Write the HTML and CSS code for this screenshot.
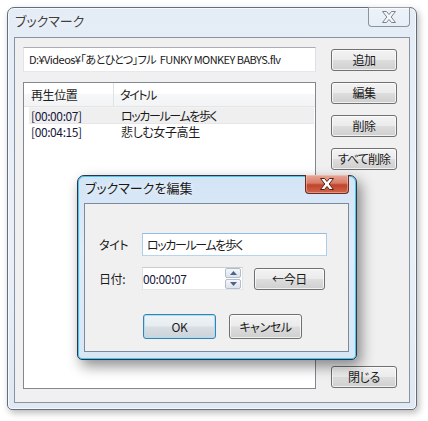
FILE: index.html
```html
<!DOCTYPE html>
<html lang="ja">
<head>
  <meta charset="UTF-8" />
  <meta name="viewport" content="width=device-width, initial-scale=1.0"/>
  <title>ブックマーク</title>
  <link rel="stylesheet" href="styles.css">
</head>
<body>
  <!-- Bookmark window (inactive) -->
  <div class="window main-window">
    <div class="titlebar">
      <span class="title">ブックマーク</span>
      <div class="close-btn inactive">
        <svg width="14" height="12" viewBox="0 0 14 12"><polygon points="0.5,0.5 4.5,0.5 7,3.5 9.5,0.5 13.5,0.5 9.2,6 13.5,11.5 9.5,11.5 7,8.5 4.5,11.5 0.5,11.5 4.8,6"/></svg>
      </div>
    </div>
    <div class="client main-client">
      <div class="left-col">
        <div class="textbox path-box">D:¥Videos¥「あとひとつ」フル&nbsp; FUNKY MONKEY BABYS.flv</div>
        <div class="listview">
          <div class="lv-header">
            <div class="lv-head col-time">再生位置</div>
            <div class="lv-head col-title kana">タイトル</div>
          </div>
          <div class="lv-row selected">
            <span class="cell-time">[00:00:07]</span>
            <span class="cell-title kana">ロッカールームを歩く</span>
          </div>
          <div class="lv-row">
            <span class="cell-time">[00:04:15]</span>
            <span class="cell-title">悲しむ女子高生</span>
          </div>
        </div>
      </div>
      <div class="right-col">
        <button class="btn side-btn">追加</button>
        <button class="btn side-btn">編集</button>
        <button class="btn side-btn">削除</button>
        <button class="btn side-btn tight">すべて削除</button>
        <button class="btn side-btn close-main">閉じる</button>
      </div>
    </div>
  </div>

  <!-- Edit dialog (active, over the main window) -->
  <div class="window dialog">
    <div class="titlebar dialog-bar">
      <span class="title">ブックマークを編集</span>
      <div class="close-btn active">
        <svg width="14" height="12" viewBox="0 0 14 12"><polygon points="0.5,0.5 4.5,0.5 7,3.5 9.5,0.5 13.5,0.5 9.2,6 13.5,11.5 9.5,11.5 7,8.5 4.5,11.5 0.5,11.5 4.8,6"/></svg>
      </div>
    </div>
    <div class="client dialog-client">
      <div class="form-row">
        <span class="label">タイト</span>
        <div class="textbox title-box focused kana">ロッカールームを歩く</div>
      </div>
      <div class="form-row">
        <span class="label">日付:</span>
        <div class="textbox time-box">
          <span class="time-text">00:00:07</span>
          <div class="spinner">
            <div class="spin up"><svg width="7" height="4" viewBox="0 0 7 4"><polygon points="0,4 3.5,0 7,4"/></svg></div>
            <div class="spin down"><svg width="7" height="4" viewBox="0 0 7 4"><polygon points="0,0 7,0 3.5,4"/></svg></div>
          </div>
        </div>
        <button class="btn today-btn">←今日</button>
      </div>
      <div class="button-row">
        <button class="btn dlg-btn default">OK</button>
        <button class="btn dlg-btn">キャンセル</button>
      </div>
    </div>
  </div>
</body>
</html>
```

FILE: styles.css
```css
/* RESET */
* { box-sizing: border-box; margin: 0; padding: 0; }
body {
  background: #fff;
  font-family: "Noto Sans CJK JP", "Noto Sans", sans-serif;
  font-feature-settings: "palt";
  font-size: 12px;
  letter-spacing: -0.4px;
  color: #1a1a1a;
  width: 428px;
  height: 421px;
  overflow: hidden;
  position: relative;
}
.kana { letter-spacing: -1.4px; }

/* WINDOW FRAMES */
.window {
  display: flex;
  flex-direction: column;
  border: 1px solid #626e7c;
  border-radius: 7px 7px 5px 5px;
}
.main-window {
  margin: 7px 0 0 7px;
  width: 410px;
  height: 403px;
  padding: 0 6px 6px 6px;
  background: linear-gradient(#e4ecf6, #e9f0f8 60%, #dfe8f3);
  box-shadow: inset 0 0 0 1px #f7fafd, 2px 3px 7px rgba(0,0,0,0.28);
}
.titlebar {
  display: flex;
  justify-content: space-between;
  align-items: flex-start;
  height: 29px;
}
.title {
  font-size: 13px;
  letter-spacing: 0;
  color: #404040;
  padding: 4px 0 0 1px;
  line-height: 18px;
  text-shadow: 0 0 6px #fff;
}

/* CAPTION CLOSE BUTTONS */
.close-btn {
  display: flex;
  align-items: center;
  justify-content: center;
  margin-top: -1px;
  border-radius: 0 0 4px 4px;
}
.close-btn.inactive {
  width: 42px;
  height: 20px;
  border: 1px solid #8d939b;
  border-top: none;
  background: linear-gradient(rgba(255,255,255,0.35), rgba(255,255,255,0.1));
}
.close-btn.inactive svg polygon { fill: #f4f6f9; stroke: #7c828a; stroke-width: 1; }
.close-btn.active {
  width: 44px;
  height: 19px;
  border: 1px solid #6a2a20;
  border-top: none;
  background: linear-gradient(#e9a897 0%, #d57c68 45%, #c2432b 55%, #d0654d 100%);
  box-shadow: inset 0 0 0 1px rgba(255,210,200,0.45);
}
.close-btn.active svg polygon { fill: #fff; stroke: #5a1d14; stroke-width: 1; }

/* CLIENT AREA */
.client {
  flex: 1;
  background: #f0f0f0;
  border: 1px solid #8894a2;
}
.main-client {
  display: flex;
  gap: 15px;
  padding: 9px 12px 13px 8px;
}
.left-col {
  width: 293px;
  display: flex;
  flex-direction: column;
  gap: 10px;
}
.right-col {
  width: 66px;
  display: flex;
  flex-direction: column;
  gap: 11px;
  padding: 2px 0 1px;
}
.close-main { margin-top: auto; }

/* TEXT BOXES */
.textbox {
  background: #fff;
  border: 1px solid;
  border-color: #abadb3 #dbdfe6 #e3e9ef #e2e3ea;
}
.path-box {
  height: 25px;
  line-height: 23px;
  padding-left: 5px;
  font-size: 11px;
  letter-spacing: -0.55px;
  white-space: nowrap;
  overflow: hidden;
}

/* LIST VIEW */
.listview {
  flex: 1;
  background: #fff;
  border: 1px solid #828790;
}
.lv-header {
  display: flex;
  height: 24px;
  background: linear-gradient(#fff 0%, #fff 45%, #f6f7f8 50%, #f3f4f5 100%);
  border-bottom: 1px solid #e4e5e7;
}
.lv-head {
  line-height: 23px;
  color: #1e1e1e;
}
.col-time {
  width: 90px;
  padding-left: 7px;
  border-right: 1px solid #e1e2e4;
}
.col-title { padding-left: 6px; }
.lv-row {
  display: flex;
  height: 17px;
  line-height: 16px;
  margin: 0 1px 0 5px;
}
.lv-row.selected {
  background: #efefef;
  border-top: 1px solid #f3f3f3;
  border-bottom: 1px solid #e6e6e6;
  line-height: 15px;
}
.cell-time {
  width: 85px;
  padding-left: 2px;
  color: #18183e;
}
.cell-title { padding-left: 7px; }

/* BUTTONS */
.btn {
  font-family: inherit;
  font-feature-settings: "palt";
  font-size: 12px;
  letter-spacing: -0.4px;
  color: #1a1a1a;
  border: 1px solid #707070;
  border-radius: 3px;
  background: linear-gradient(#f3f3f3 0%, #ebebeb 48%, #dddddd 52%, #cfcfcf 100%);
  box-shadow: inset 0 0 0 1px rgba(255,255,255,0.7);
  line-height: 18px;
}
.btn.tight { letter-spacing: -0.9px; }
.side-btn { height: 22px; }

/* EDIT DIALOG */
.dialog {
  position: absolute;
  left: 77px;
  top: 175px;
  width: 280px;
  height: 185px;
  padding: 0 7px 7px 6px;
  border-color: #27374c;
  background: linear-gradient(#d3e4f5 0%, #dfecf9 40%, #d7e7f6 100%);
  box-shadow: inset 0 0 0 1px #4fc4ee, inset 0 0 0 2px #cfe6f7, 4px 6px 14px rgba(0,0,0,0.45);
}
.dialog-bar { height: 27px; }
.dialog-bar .title { padding-top: 3px; color: #1a1a1a; }
.dialog-client {
  display: flex;
  flex-direction: column;
  gap: 11px;
  padding: 29px 0 0 14px;
  border-color: #7c8a9c;
}
.form-row {
  display: flex;
  align-items: center;
}
.label {
  width: 43px;
  color: #1a1a1a;
}
.title-box {
  width: 185px;
  height: 23px;
  line-height: 21px;
  padding-left: 4px;
}
.textbox.focused { border-color: #8ebde6 #a9cdec #b5d5ef #a9cdec; }
.time-box {
  width: 101px;
  height: 23px;
  display: flex;
  align-items: center;
  justify-content: space-between;
  border-color: #c9ccd1 #dfe2e6 #e3e6ea #dfe2e6;
  padding: 0 1px 0 0;
}
.time-text {
  color: #18183e;
  line-height: 21px;
}
.spinner {
  display: flex;
  flex-direction: column;
  gap: 1px;
  width: 16px;
}
.spin {
  height: 10px;
  display: flex;
  align-items: center;
  justify-content: center;
  border: 1px solid #b3bccb;
  border-radius: 2px;
  background: linear-gradient(#f4f6f9, #dde3ec);
}
.spin svg polygon { fill: #4d6289; }
.today-btn {
  width: 71px;
  height: 22px;
  margin-left: 11px;
}
.button-row {
  display: flex;
  gap: 13px;
  margin: 13px 0 0 44px;
}
.dlg-btn {
  width: 73px;
  height: 25px;
}
.dlg-btn.default {
  border-color: #3c7fb1;
  box-shadow: inset 0 0 0 1px #a6e0f7;
  background: linear-gradient(#eef3f6 0%, #e6ecf0 48%, #d8dee3 52%, #ccd3d9 100%);
}
```
